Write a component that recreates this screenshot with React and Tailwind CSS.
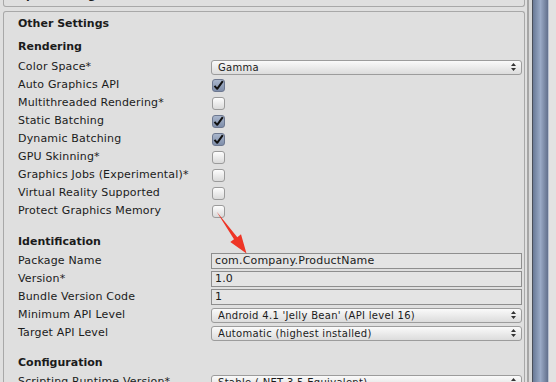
import React from 'react';

const Check = ({ on }) => (
    <div
        className={
            on
                ? 'w-[13px] h-[13px] ml-[1px] rounded-[3px] border border-[#6d7890] bg-gradient-to-b from-[#a9b6cc] to-[#7f8eaa] flex items-center justify-center'
                : 'w-[13px] h-[13px] ml-[1px] rounded-[3px] border border-[#9b9b9b] bg-gradient-to-b from-[#fdfdfd] to-[#dadada]'
        }
    >
        {on && (
            <svg width="11" height="11" viewBox="0 0 11 11">
                <path d="M1.5 5.8 L4.2 8.8 L9.8 1.2" fill="none" stroke="#111" strokeWidth="2" strokeLinejoin="round" />
            </svg>
        )}
    </div>
);

const Dropdown = ({ value }) => (
    <div className="h-[15px] w-full rounded-[3px] border border-[#9c9c9c] bg-gradient-to-b from-[#fafafa] to-[#dcdcdc] flex items-center pl-[6px] pr-[5px] text-[10px] tracking-[0.3px]">
        <span className="flex-1 truncate">{value}</span>
        <svg width="5" height="8" viewBox="0 0 5 8">
            <path d="M2.5 0 L5 3 L0 3 Z M0 5 L5 5 L2.5 8 Z" fill="#333" />
        </svg>
    </div>
);

const TextField = ({ value }) => (
    <div className="h-[16px] w-full border border-[#8e8e8e] bg-[#e4e4e4] flex items-center pl-[3px] text-[11px]">
        {value}
    </div>
);

const Row = ({ label, children }) => (
    <div className="h-[18px] flex items-center">
        <div className="w-[193px] shrink-0 whitespace-nowrap">{label}</div>
        <div className="flex-1 flex items-center">{children}</div>
    </div>
);

const Header = ({ children, className }) => (
    <div className={'h-[18px] flex items-center font-bold tracking-normal ' + className}>{children}</div>
);

const rendering = [
    ['Auto Graphics API', true],
    ['Multithreaded Rendering*', false],
    ['Static Batching', true],
    ['Dynamic Batching', true],
    ['GPU Skinning*', false],
    ['Graphics Jobs (Experimental)*', false],
    ['Virtual Reality Supported', false],
    ['Protect Graphics Memory', false],
];

export default function App() {
    return (
        <div className="relative w-[556px] h-[382px] overflow-hidden bg-[#dfdfdf] flex font-['DejaVu_Sans',sans-serif] text-[11px] tracking-[0.17px] text-[#1b1b1b]">
            <div className="w-[527px] shrink-0 flex flex-col pl-[3px] pr-[2px]">
                {/* previous panel, scrolled off */}
                <div className="h-[7px] shrink-0 overflow-hidden border border-t-0 border-[#a8a8a8] rounded-b-[3px] pl-[14px]">
                    <div className="h-[18px] -mt-[13px] flex items-center font-bold">Splash Image</div>
                </div>

                <div className="mt-[4px] flex-1 border border-b-0 border-[#a8a8a8] rounded-t-[3px] pl-[14px] pr-[2px] pt-[3px]">
                    <Header>Other Settings</Header>

                    <Header className="mt-[5px] mb-[2px]">Rendering</Header>
                    <Row label="Color Space*">
                        <Dropdown value="Gamma" />
                    </Row>
                    {rendering.map(([label, on]) => (
                        <Row key={label} label={label}>
                            <Check on={on} />
                        </Row>
                    ))}

                    <Header className="mt-[13px] mb-[1px]">Identification</Header>
                    <Row label="Package Name">
                        <TextField value="com.Company.ProductName" />
                    </Row>
                    <Row label="Version*">
                        <TextField value="1.0" />
                    </Row>
                    <Row label="Bundle Version Code">
                        <TextField value="1" />
                    </Row>
                    <Row label="Minimum API Level">
                        <Dropdown value="Android 4.1 'Jelly Bean' (API level 16)" />
                    </Row>
                    <Row label="Target API Level">
                        <Dropdown value="Automatic (highest installed)" />
                    </Row>

                    <Header className="mt-[12px] mb-[1px]">Configuration</Header>
                    <Row label="Scripting Runtime Version*">
                        <Dropdown value="Stable (.NET 3.5 Equivalent)" />
                    </Row>
                </div>
            </div>

            {/* scrollbar */}
            <div className="w-[2px] bg-[#a6a6a6]" />
            <div className="w-[3px] bg-[#d9d9d9]" />
            <div className="w-[1px] bg-[#4a4f5a]" />
            <div className="w-[15px] bg-gradient-to-r from-[#6a7a97] via-[#9aaac6] to-[#62708c]" />
            <div className="w-[1px] bg-[#b9c2d2]" />
            <div className="flex-1 bg-[#e2e2e2]" />

            {/* annotation arrow */}
            <svg className="absolute left-0 top-0 pointer-events-none" width="556" height="382">
                <polygon
                    points="216.5,211.5 237.3,237.2 241,234.3 246.5,253.5 230.3,242 234,239.3"
                    fill="#ee3526"
                />
            </svg>
        </div>
    );
}
